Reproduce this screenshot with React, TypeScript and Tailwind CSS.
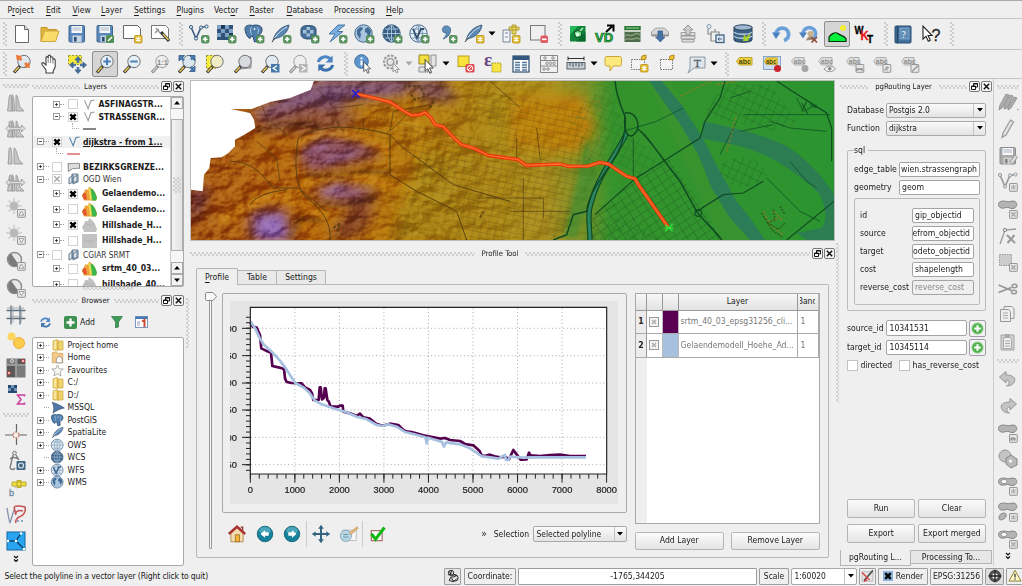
import React from "react";

type Kids = { children?: React.ReactNode };

/* ---------- icon primitives ---------- */

function S({ children, n = 22 }: Kids & { n?: number }) {
  return (
    <svg viewBox="0 0 22 22" width={n} height={n} className="block shrink-0 overflow-visible">
      {children}
    </svg>
  );
}

const Plus = ({ x = 12, y = 12 }: { x?: number; y?: number }) => (
  <g transform={`translate(${x} ${y})`}>
    <rect x="0.5" y="0.5" width="7.5" height="7.5" rx="1.5" fill="#5f9a63" stroke="#4a7f50" strokeWidth="0.8" />
    <path d="M4.25 2v4.5M2 4.25h4.5" stroke="#fff" strokeWidth="1.7" />
  </g>
);
const Star = ({ x = 12, y = 12, c = "#e3bd33", s = "#b8921a" }: { x?: number; y?: number; c?: string; s?: string }) => (
  <g transform={`translate(${x} ${y})`}>
    <rect x="0.5" y="0.5" width="7.5" height="7.5" rx="1" fill={c} stroke={s} strokeWidth="0.8" />
    <path d="M4.25 1.7v5M2 3l4.5 2.6M6.5 3L2 5.6" stroke="#fff" strokeWidth="1.1" />
  </g>
);
const Lens = ({ gray = false, fill = "#dfe8ee" }: { gray?: boolean; fill?: string }) => (
  <g>
    <path d="M9 13L3 19.5" stroke={gray ? "#8b8b8b" : "#333"} strokeWidth="3.2" />
    <path d="M8 14L3.6 18.8" stroke={gray ? "#c9c9c9" : "#e8c95a"} strokeWidth="1.6" />
    <circle cx="13" cy="8.5" r="6.2" fill={fill} stroke={gray ? "#a0a0a0" : "#6c747a"} strokeWidth="1" />
  </g>
);
const Globe = ({ dark = false, light = false }: { dark?: boolean; light?: boolean }) => (
  <g>
    <circle cx="10.5" cy="10.5" r="8.7" fill={dark ? "#395d80" : light ? "#e4edf5" : "#a9c4dd"} stroke="#46698c" strokeWidth="1" />
    {dark || light ? (
      <path
        d="M2 10.5h17M10.5 2v17M4 6h13M4 15h13M10.5 2c-5.5 5-5.5 12 0 17c5.5-5 5.5-12 0-17"
        fill="none"
        stroke={dark ? "#a6c3de" : "#7e9dbb"}
        strokeWidth="1"
      />
    ) : (
      <path d="M4 7l3-3l3 1l-1 2l-2 2l1 2l-1 5l-3-5zM12 6l3-2l3 4l-1 4l-2 2l-1-4l-2-1z" fill="#426a93" />
    )}
  </g>
);
const Feather = () => (
  <g>
    <path d="M3 17C5 10 10 4 19 2C18 9 13 14 5.5 15.5z" fill="#5b88b4" stroke="#2e4d6c" strokeWidth="0.8" />
    <path d="M2 19C6 12 11 7 17 4" stroke="#d5e4f1" strokeWidth="1" fill="none" />
    <path d="M2 19l3-4" stroke="#333" strokeWidth="1" />
  </g>
);
const Arrow = () => <path d="M9 5v13l3-2.700l2.300 5l2-1l-2.300-4.800h4z" fill="#fff" stroke="#333" strokeWidth="1" />;
const Vee = ({ c = "#3f5f80" }: { c?: string }) => (
  <g fill="none" stroke={c}>
    <path d="M3 4L8 15.5L13 4.5L18.5 3.5" strokeWidth="1.7" />
    <g fill="#dbe7f1" strokeWidth="1">
      <circle cx="3" cy="4" r="1.6" />
      <circle cx="8" cy="15.5" r="1.6" />
      <circle cx="13" cy="4.5" r="1.6" />
      <circle cx="18.5" cy="3.5" r="1.6" />
    </g>
  </g>
);
const Floppy = ({ gray = false }: { gray?: boolean }) => (
  <g>
    <rect x="3" y="2.5" width="15.5" height="16.5" rx="1" fill={gray ? "#aaa" : "#5a88bd"} stroke={gray ? "#8c8c8c" : "#3b6390"} />
    <rect x="5.5" y="3" width="10.5" height="7" fill="#f5f7fa" />
    <path d="M6.5 5h8.5M6.5 7h8.5" stroke="#9aa5b1" strokeWidth="0.8" />
    <rect x="6.5" y="12.5" width="9" height="6.5" fill={gray ? "#ccc" : "#c8d4e2"} />
    <rect x="8" y="14" width="2.6" height="4.5" fill={gray ? "#888" : "#2d4d75"} />
  </g>
);
const Checker = () => (
  <g>
    <rect x="2" y="2" width="16" height="15" fill="#315379" />
    <path d="M2 2h4v4H2zM10 2h4v4h-4zM14 6h4v4h-4zM6 6h4v4H6zM2 10h4v4H2zM10 10h4v4h-4z" fill="#7fa3c7" />
    <path d="M6 2h4v4H6zM14 10h4v4h-4z" fill="#1e3a5a" />
  </g>
);
const Elephant = () => (
  <g>
    <path d="M2 5.500C2 2.500 6 1.500 9.500 2.500C13 1.500 18.500 2 19 6c.3 3-1 5-2.500 5.500h-2l.5 6.500l-3.500 1l-1.500-5.500l-1.500-.5l-1.500 2.500C4 14.500 2 9 2 5.500z" fill="#4f7dab" stroke="#294a6e" strokeWidth="1" />
    <path d="M8.500 4c-1.500 2-1.500 6 .5 8M14.500 4.500c1.500 2 1 5 0 7" fill="none" stroke="#a9c4dd" strokeWidth="1" />
    <circle cx="11.500" cy="6" r="0.900" fill="#e6eff7" />
  </g>
);
const Bean = ({ y = 0 }: { y?: number }) => (
  <path
    transform={`translate(0 ${y})`}
    d="M1.500 6.500C1.500 3 6 2.500 9.500 3.500C12.500 4.500 15 2 18 3.500C21 5.500 20 10 16 10.500C12 11 12 8.500 9 9.500C5.500 11 1.500 10 1.500 6.500z"
    fill="#b4b4b4"
    stroke="#858585"
    strokeWidth="1"
  />
);
const GB = ({ x = 12, y = 12, k = "x" }: { x?: number; y?: number; k?: string }) => (
  <g transform={`translate(${x} ${y})`}>
    <rect x="0.5" y="0.5" width="7.8" height="7.8" rx="0.5" fill="#e6e6e6" stroke="#979797" strokeWidth="1" />
    {k === "x" && <path d="M2.3 2.3l4.200 4.200M6.500 2.300l-4.200 4.200" stroke="#a5a5a5" strokeWidth="1.300" />}
    {k === "u" && <path d="M4.400 2.200l2.400 4H2z" fill="#fff" stroke="#888" strokeWidth="0.800" />}
    {k === "d" && <path d="M4.400 6.600l2.400-4H2z" fill="#fff" stroke="#888" strokeWidth="0.800" />}
    {k === "s" && <path d="M4.400 1.800v5M2 3l4.800 2.800M6.800 3L2 5.800" stroke="#aaa" strokeWidth="1" />}
  </g>
);
const Tag = ({ gray = false, w = 15 }: { gray?: boolean; w?: number }) => (
  <g>
    <path d={`M2.500 10.500L5.500 6.500H${w + 3}V14H5.500z`} fill={gray ? "#dedede" : "#f0d33c"} stroke={gray ? "#a7a7a7" : "#b79a22"} strokeWidth="0.900" />
    <text x="4.800" y="12.800" fontSize="7" fontWeight="bold" fill={gray ? "#909090" : "#4d4312"} className="font-['Liberation_Sans',sans-serif]">
      abc
    </text>
  </g>
);
const Refresh = ({ n = 22 }: { n?: number }) => (
  <S n={n}>
    <path d="M3.500 9.500C4.500 4.500 11 2 16 6" fill="none" stroke="#4e86c4" strokeWidth="3.200" />
    <path d="M18.500 2.500v7.500h-7.500z" fill="#4e86c4" />
    <path d="M18.500 12.500C17.500 17.500 11 20 6 16" fill="none" stroke="#3b71ae" strokeWidth="3.200" />
    <path d="M3.500 19.500v-7.500h7.500z" fill="#3b71ae" />
  </S>
);

/* ---------- toolbar building blocks ---------- */

function Cell({ children, on = false }: Kids & { on?: boolean }) {
  return (
    <div className="flex h-full w-[27.55px] shrink-0 items-center justify-center">
      <div className={on ? "flex h-[26px] w-[26px] items-center justify-center rounded-[2px] border border-[#8f8f8f] bg-[#d5d5d5]" : "flex"}>{children}</div>
    </div>
  );
}
const Drop = ({ gray = false, wide = false }: { gray?: boolean; wide?: boolean }) => (
  <div className={wide ? "flex h-full w-[10px] shrink-0 items-center justify-start" : "flex h-full w-[9.2px] shrink-0 items-center justify-start"}>
    <svg viewBox="0 0 8 5" width="8" height="5">
      <path d="M0.500 0.500h7L4 4.500z" fill={gray ? "#a8a8a8" : "#000"} />
    </svg>
  </div>
);
const dots = "bg-[radial-gradient(circle_at_1px_1px,#cdcdcd_0.7px,transparent_0.9px),radial-gradient(circle_at_3px_3px,#cdcdcd_0.7px,transparent_0.9px)] bg-size-[4px_4px]";
const VGrip = ({ first = false }: { first?: boolean }) => (
  <div className={first ? "flex h-full w-[8.4px] shrink-0 items-center justify-end pr-[1px]" : "flex h-full w-[11.4px] shrink-0 items-center justify-end pr-[2px]"}>
    <div className={`h-[24px] w-[4px] ${dots}`} />
  </div>
);
const HGrip = () => <div className={`h-[4px] min-w-0 flex-1 ${dots}`} />;

function DockTitle({ title, gap }: { title: string; gap: string }) {
  return (
    <div className="flex h-[14px] shrink-0 items-center">
      <HGrip />
      <span className={`${gap} text-[7.7px]`}>{title}</span>
      <HGrip />
      <div className="ml-[2px] flex gap-[1px]">
        <div className="flex h-[11px] w-[11px] items-center justify-center rounded-[2px] border border-[#777] bg-[#f6f6f6]">
          <svg viewBox="0 0 9 9" width="9" height="9" fill="#fff" stroke="#111" strokeWidth="1">
            <path d="M3.500 1.500h4v3.500h-4zM3.500 2h4" />
            <path d="M1.500 4h4v3.500h-4zM1.500 4.500h4" />
          </svg>
        </div>
        <div className="flex h-[11px] w-[11px] items-center justify-center rounded-[2px] border border-[#777] bg-[#f6f6f6]">
          <svg viewBox="0 0 9 9" width="9" height="9" stroke="#111" strokeWidth="1.500">
            <path d="M1.800 1.800l5.400 5.400M7.200 1.800L1.800 7.200" />
          </svg>
        </div>
      </div>
    </div>
  );
}

function Menu() {
  const items: [string, number, string][] = [
    ["Project", 1, "w-[38.500px]"], ["Edit", 0, "w-[26.500px]"], ["View", 0, "w-[28.500px]"], ["Layer", 0, "w-[33px]"],
    ["Settings", 0, "w-[42.500px]"], ["Plugins", 0, "w-[37.500px]"], ["Vector", 4, "w-[35.500px]"], ["Raster", 0, "w-[37px]"],
    ["Database", 0, "w-[47.500px]"], ["Processing", -1, "w-[52px]"], ["Help", 0, "w-[30px]"],
  ];
  return (
    <div className="flex h-[17.500px] shrink-0 items-center border-t border-[#a9a9a9] pl-[7.500px] pt-[1.500px]">
      {items.map(([t, u, w]) => (
        <div key={t} className={`${w} shrink-0 whitespace-nowrap text-[8.500px]`}>
          {u < 0 ? t : (
            <>
              {t.slice(0, u)}
              <span className="underline underline-offset-[1.500px]">{t[u]}</span>
              {t.slice(u + 1)}
            </>
          )}
        </div>
      ))}
    </div>
  );
}

function Toolbar1() {
  return (
    <div className="flex h-[31px] shrink-0 items-center border-t border-[#c4c4c4]">
      <VGrip first />
      <Cell><S><path d="M4.500 2.500h9l4 4v13h-13z" fill="#fff" stroke="#666" /><path d="M13.500 2.500v4h4" fill="#ddd" stroke="#666" /></S></Cell>
      <Cell><S><path d="M2 18.500V4.500h6l1.500 2h8v4" fill="#e0b63a" stroke="#c0962c" /><path d="M2 18.500l3.500-10.500h14.500l-3.500 10.500z" fill="#f9dc6c" stroke="#cfa53a" /></S></Cell>
      <Cell><S><Floppy /></S></Cell>
      <Cell><S><Floppy /><rect x="12" y="12" width="8" height="8" rx="1.500" fill="#4f9055" /><path d="M14 18l4-4" stroke="#fff" strokeWidth="1.500" /></S></Cell>
      <Cell><S><path d="M2.500 2.500h14l3 3v10h-17z" fill="#fff" stroke="#666" /><Star x={13} /></S></Cell>
      <Cell><S><path d="M2.500 2.500h14l3 3v10h-17z" fill="#fff" stroke="#777" /><path d="M6 10l4-4M7 5l4 5" stroke="#999" strokeWidth="1.500" /><path d="M12 9l8 9" stroke="#333" strokeWidth="3.200" /><path d="M14 11l5.500 6" stroke="#e6cc5b" strokeWidth="1.500" /></S></Cell>
      <VGrip />
      <Cell><S><Vee /><Plus x={13} /></S></Cell>
      <Cell><S><Checker /><Plus x={13} /></S></Cell>
      <Cell><S><Elephant /><Plus x={13} /></S></Cell>
      <Cell><S><Feather /><Plus x={13} /></S></Cell>
      <Cell><S><path d="M3 7c0-4 4-4.500 7.500-4.500S18 3 18 7v4c0 4-4 5-7.500 5S3 15 3 11z" fill="#46709b" stroke="#2c4b6d" /><path d="M5 7h3.500v3.500H5zM12 7h3.500v3.500H12zM8.500 10.500h3.500v3H8.500zM8.500 4h3.500v3H8.500z" fill="#a6c1da" /><Plus x={13} /></S></Cell>
      <Cell><S><path d="M12 2L3 11h6l-5 8L17 8.500h-6L19 2z" fill="#79aee0" stroke="#42709f" strokeWidth="0.900" /><Plus x={13} /></S></Cell>
      <Cell><S><Globe /><Plus x={13} /></S></Cell>
      <Cell><S><Globe dark /><Plus x={13} /></S></Cell>
      <Cell><S><Globe light /><path d="M5 6l4 9l4-9h3" fill="none" stroke="#314f6d" strokeWidth="1.800" /><Plus x={13} /></S></Cell>
      <Cell><S><path d="M10 3c4-.5 5.500 3 4 7c-1 3-4 5-7 6c2-2 3.500-4 3.500-6C7 10 6 8 6.500 6S8 3 10 3z" fill="#5f8dba" stroke="#3c6186" strokeWidth="0.800" /><Plus x={13} /></S></Cell>
      <Cell><S><Feather /><Star x={13} /></S></Cell>
      <Drop />
      <Cell><S><path d="M3 7h7v12H3zM5 10h3M5 14h3" fill="#f2f3f7" stroke="#76829a" /><path d="M9 4h10v3H9zM12 2h4v9h-4z" fill="#e7d65a" stroke="#a3932c" strokeWidth="0.800" /><Star x={12} /></S></Cell>
      <Cell><S><rect x="2.500" y="2.500" width="14.500" height="14.500" fill="#efefef" stroke="#777" /><rect x="12.500" y="12.500" width="7.500" height="7.500" rx="1.500" fill="#e05c62" /><path d="M14 16.300h4.500" stroke="#fff" strokeWidth="1.700" /></S></Cell>
      <VGrip />
      <Cell><S><rect x="3" y="3" width="15.500" height="15.500" fill="#12863c" /><path d="M3 3h8l-8 9z" fill="#24b85b" /><path d="M18.500 9v9.500H9z" fill="#0a6a2c" /><path d="M7 9l4-1.500l4 2l-1 4l-5 1z" fill="#7fe08f" stroke="#0b5224" /><circle cx="10.500" cy="11.500" r="1.800" fill="#e4ffe9" /><path d="M13 8l3-3" stroke="#baf0c8" strokeWidth="1.500" /></S></Cell>
      <Cell><S><text x="1" y="19" fontSize="13" fontWeight="bold" fill="#2fc84a" stroke="#0b5a1c" strokeWidth="0.700" className="font-['Liberation_Sans',sans-serif]">VD</text><path d="M12 9L18 3.500M13 2.500h6.500v6" stroke="#000" strokeWidth="2" fill="none" /></S></Cell>
      <Cell><S><rect x="2.500" y="3" width="16" height="16" fill="#4d6d4b" /><path d="M2.500 3h16v4h-16z" fill="#247a30" /><path d="M2.500 8h16" stroke="#f0f5f0" strokeWidth="1.500" /><path d="M4 5h13" stroke="#a9cfa9" /><path d="M3 13c3-3 5 1 8-1s5-2 7 0M3 17c3-3 5 0 8-1s5-1 7 0" stroke="#8a9c7c" fill="none" strokeWidth="1.500" /></S></Cell>
      <Cell><S><path d="M2.500 9l4-4h9l4 4v4h-17z" fill="#d6d6d6" stroke="#a5a5a5" /><path d="M3 11.500h16v1.500H3z" fill="#8e8e8e" /><path d="M9 8h4.500v6h2.500l-4.700 5L6.500 14H9z" fill="#4574a6" stroke="#2f5681" strokeWidth="0.700" /></S></Cell>
      <Cell><S><path d="M4 9.500h14v3H4zM4 13h14v3H4zM5 16.500h12V19H5z" fill="#ddd" stroke="#9a9a9a" strokeWidth="0.900" /><path d="M9 12V7H6l5-5l5 5h-3v5z" fill="#cfcfcf" stroke="#8c8c8c" strokeWidth="0.900" /></S></Cell>
      <Cell><S><circle cx="5" cy="3.500" r="2" fill="none" stroke="#7a96b0" /><path d="M4 6v5h4M7 9h8v9H7zM11 6v3" fill="none" stroke="#8a8a8a" strokeWidth="1.200" /><rect x="12" y="12" width="8" height="7.500" fill="#dfe8f1" stroke="#3f6288" strokeWidth="1.300" /><path d="M18 16h-4M15.500 14.500L14 16l1.500 1.500" stroke="#3f6288" fill="none" /></S></Cell>
      <Cell><S><path d="M2 4v13c0 3 18 3 18 0V4z" fill="#3c6186" stroke="#263f5a" /><ellipse cx="11" cy="4.500" rx="9" ry="2.700" fill="#9db8d0" stroke="#263f5a" /><path d="M2 9c2 3 16 3 18 0M2 13c2 3 16 3 18 0" stroke="#bdd0e0" fill="none" strokeWidth="1.300" /><path d="M11 18l1-7l2 3l5-4l-3 8z" fill="#a7cf2e" /></S></Cell>
      <VGrip />
      <Cell><S><path d="M5 11.500A6.300 6.300 0 1 1 13 17.500" fill="none" stroke="#6ba0d8" strokeWidth="3.800" /><path d="M1 9.500h8.500l-4.500 6.500z" fill="#4b82c3" /></S></Cell>
      <Cell><S><path d="M5 11.500A6.300 6.300 0 1 1 15 16" fill="none" stroke="#6ba0d8" strokeWidth="3.600" /><path d="M1 9.500h8l-4 6z" fill="#4b82c3" /><circle cx="12.500" cy="11" r="3" fill="#c9b08e" /><path d="M8 17.500c1-5 8-5 9-1z" fill="#9a8a74" /><path d="M13.500 14l5.500 5.500M19 14l-5.500 5.500" stroke="#8c4a38" strokeWidth="1.700" /></S></Cell>
      <Cell on><S><circle cx="17" cy="5" r="3" fill="#f6ee35" /><path d="M3 18.500V14c2-3 6-5.500 9-3.500c2 2 6 2 8 5v3z" fill="#00f23c" stroke="#0a2d0d" strokeWidth="1.200" /></S></Cell>
      <Cell><S><g fontWeight="bold" className="font-['Liberation_Sans',sans-serif]"><text x="1.500" y="11" fontSize="11" textLength="9" lengthAdjust="spacingAndGlyphs" stroke="#000" strokeWidth="0.300">W</text><text x="7.500" y="16.500" fontSize="12" textLength="8" lengthAdjust="spacingAndGlyphs" fill="#e8151b" stroke="#e8151b" strokeWidth="0.300">K</text><text x="14" y="20" fontSize="10" stroke="#000" strokeWidth="0.300">T</text></g></S></Cell>
      <VGrip />
      <Cell><S><rect x="3" y="3" width="16" height="17" rx="1" fill="#41719f" stroke="#294c70" /><path d="M5.500 3v17" stroke="#23415f" strokeWidth="1.500" /><rect x="8" y="5" width="9" height="11" fill="#5f8db8" stroke="#8fb1d0" strokeWidth="0.700" /><text x="9.500" y="14.500" fontSize="10" fill="#fff" className="font-['Liberation_Serif',serif]">?</text></S></Cell>
      <Cell><S><path d="M3 3v13l3-2.700l2.300 5l2-1l-2.200-4.800h4z" fill="#fff" stroke="#222" strokeWidth="1.100" /><text x="11.500" y="17.500" fontSize="16" fill="#222" stroke="#222" strokeWidth="0.300" className="font-['Liberation_Sans',sans-serif]">?</text></S></Cell>
      <VGrip />
    </div>
  );
}

function Toolbar2() {
  return (
    <div className="flex h-[30.500px] shrink-0 items-center border-y border-[#c4c4c4]">
      <VGrip first />
      <Cell><S><Lens /><path d="M5 2l6 1l-5 5zM19 15l-6-1l5-5z" fill="#ec7733" /><path d="M8 4.500l2.500 2.500M16.500 12.500l-2.500-2.500" stroke="#ec7733" strokeWidth="2.600" /></S></Cell>
      <Cell><S><path d="M7 20v-3L3 11.500c-1-2 1-2.500 2.300-1L7 12V5c0-1.800 2.200-1.800 2.200 0V3.500c0-1.800 2.400-1.800 2.400 0V5c0-1.800 2.300-1.500 2.300 0V7c0-1.600 2.300-1.500 2.300.3V14l-2 4v2z" fill="#fff" stroke="#444" strokeWidth="1.100" /><path d="M9.200 5v5M11.600 5v5M13.900 7v3.500" stroke="#666" strokeWidth="0.800" /></S></Cell>
      <Cell><S><path d="M2.500 2.500h13v9h-13z" fill="#f5e93d" stroke="#a59a20" strokeDasharray="2 1.500" /><path d="M12 3.500l3 3.500h-6zM12 20.500l3-3.500h-6zM3.500 12l3.500-3v6zM20.500 12l-3.500-3v6z" fill="#4a75a5" stroke="#2f5073" strokeWidth="0.700" /><path d="M12 7v3M12 14v3M7 12h3M14 12h3" stroke="#4a75a5" strokeWidth="2.600" /></S></Cell>
      <Cell on><S><Lens fill="#e7eff6" /><path d="M13 4.800v7.400M9.300 8.500h7.400" stroke="#4a7db5" strokeWidth="2" /></S></Cell>
      <Cell><S><Lens fill="#e7eff6" /><path d="M9.300 8.500h7.400" stroke="#4a7db5" strokeWidth="2" /></S></Cell>
      <Cell><S><Lens gray fill="#ececec" /><text x="8" y="11.500" fontSize="7.500" fontWeight="bold" fill="#888" className="font-['Liberation_Sans',sans-serif]">1:1</text></S></Cell>
      <Cell><S><Lens fill="#dbe6ef" /><path d="M3 2.500h5.500L3 8zM19 2.500v5.500l-5.500-5.500zM19 18.500h-5.500l5.500-5.500z" fill="#4a79ae" stroke="#315a88" strokeWidth="0.800" /><path d="M4 3.500l4 4M18 3.500l-3 3M18 17.500l-3.500-3.500" stroke="#4a79ae" strokeWidth="2.500" /></S></Cell>
      <Cell><S><path d="M2.500 2.500h9v13h-9z" fill="#f6ec3f" stroke="#9b9020" strokeDasharray="2 1.500" /><Lens fill="#f2ecc6" /></S></Cell>
      <Cell><S><path d="M8 5l11-1v11l-11 1z" fill="#b9b9bd" stroke="#8f8f95" /><Lens fill="#d9dadd" /></S></Cell>
      <Cell><S><Lens /><rect x="12" y="11" width="8.500" height="8.500" fill="#4779a9" /><path d="M18 12.700l-3.800 2.500L18 17.700" fill="none" stroke="#fff" strokeWidth="1.300" /></S></Cell>
      <Cell><S><Lens gray fill="#eee" /><rect x="12" y="11" width="8.500" height="8.500" fill="#b5b5b5" /><path d="M14.500 12.700l3.800 2.500l-3.800 2.500" fill="none" stroke="#fff" strokeWidth="1.300" /></S></Cell>
      <Cell><Refresh n={21} /></Cell>
      <VGrip />
      <Cell><S><circle cx="8.500" cy="8.500" r="6.800" fill="#5d94cc" stroke="#3d6d9f" /><path d="M8.500 4.500v1.800M8.500 7.500v5" stroke="#fff" strokeWidth="2" /><g transform="translate(4 5) scale(0.750)"><Arrow /></g></S></Cell>
      <Cell><S><circle cx="9.500" cy="9" r="6.500" fill="#e6e6e6" stroke="#9a9a9a" strokeWidth="2" strokeDasharray="2.500 1.300" /><circle cx="9.500" cy="9" r="3.300" fill="none" stroke="#9a9a9a" strokeWidth="1.300" /><path d="M12 10v9l2-2l1.500 3l1.500-1l-1.500-2.500h3z" fill="#eee" stroke="#999" /></S></Cell>
      <Drop gray />
      <Cell><S><path d="M2 2h10v9H2z" fill="#f3df40" stroke="#958722" /><path d="M14 2h5v11h-5zM2 14h9v5H2z" fill="#e4e4e6" stroke="#909096" /><g transform="translate(0 2) scale(0.900)"><Arrow /></g></S></Cell>
      <Drop wide />
      <Cell><S><rect x="3" y="3" width="11" height="10.500" fill="#f7e33c" stroke="#b6a127" /><rect x="10.500" y="11" width="9" height="8.500" rx="1.500" fill="#df4a50" /><circle cx="15" cy="15.200" r="2.700" fill="none" stroke="#fff" /><path d="M13 17l4-4" stroke="#fff" /></S></Cell>
      <Cell><S><text x="2" y="12.500" fontSize="19" fontWeight="bold" fill="#674683" className="font-['Liberation_Serif',serif]">ε</text><path d="M10 10h9v9h-9z" fill="#f7e546" stroke="#a59a20" strokeDasharray="1.500 1" /></S></Cell>
      <Cell><S><rect x="3" y="3" width="16" height="16" fill="#fff" stroke="#2c4c6e" strokeWidth="1.200" /><path d="M3 3h16v4H3z" fill="#32587f" /><path d="M5 9.500h5M5 12h5M5 14.500h5M5 17h5M12 9.500h5M12 12h5M12 14.500h5M12 17h5" stroke="#55789b" strokeWidth="1.300" /></S></Cell>
      <Cell><S><path d="M2.500 2.500h17v17h-17zM2.500 7.500h17M2.500 13h17" fill="#f1f1f1" stroke="#858585" /><g fill="#ddd" stroke="#858585" strokeWidth="0.800"><circle cx="7" cy="5" r="1.300" /><circle cx="15" cy="5" r="1.300" /><circle cx="9" cy="10.300" r="1.300" /><circle cx="12.500" cy="10.300" r="1.300" /><circle cx="16" cy="10.300" r="1.300" /><circle cx="6" cy="16" r="1.300" /><circle cx="10" cy="16" r="1.300" /></g></S></Cell>
      <Cell><S><path d="M3 5.500h16M3 3.500v4M19 3.500v4" stroke="#333" /><rect x="2" y="9.500" width="18" height="6.500" fill="#c6cdd4" stroke="#58626c" /><path d="M5 10v3M8 10v4M11 10v3M14 10v4M17 10v3" stroke="#48525c" /></S></Cell>
      <Drop />
      <Cell><S><path d="M4.500 3.500h13c2 0 2 1 2 2v5c0 2-1 2.500-2 2.500h-6l-3.500 5v-5h-3c-1.500 0-2-1-2-2.500v-5c0-1 .5-2 2-2z" fill="#fbe97e" stroke="#caa63a" /></S></Cell>
      <Cell><S><rect x="2.500" y="6.500" width="13" height="10" fill="#f3f3f3" stroke="#777" strokeDasharray="1.500 1" /><path d="M12 7l1-4l4-1v4z" fill="#eec334" stroke="#b08a1b" /><Star x={11} y={11} /></S></Cell>
      <Cell><S><rect x="3.500" y="6.500" width="12" height="10" fill="#f3f3f3" stroke="#777" strokeDasharray="1.500 1" /><path d="M12 7l1-4l4-1v4z" fill="#eec334" stroke="#b08a1b" /></S></Cell>
      <div className="w-px shrink-0" />
      <Cell><S><path d="M4 4h15v11H8l-6 5l2-5z" fill="#dfe5ea" stroke="#8c98a3" /><text x="8" y="13.500" fontSize="11" fill="#4a5a69" stroke="#4a5a69" strokeWidth="0.300" className="font-['Liberation_Serif',serif]">T</text></S></Cell>
      <Drop />
      <VGrip />
      <Cell><S><g transform="translate(0 -2)"><Tag /></g></S></Cell>
      <Cell><S><rect x="2.500" y="3.500" width="17" height="13" fill="#cfdef0" stroke="#88a6c7" /><g transform="translate(1 -1) scale(0.850 0.900)"><Tag /></g><circle cx="16.500" cy="15.500" r="3.500" fill="#c8232b" /></S></Cell>
      <Cell><S><g transform="translate(0 -2)"><Tag gray w={12} /></g><circle cx="16" cy="15.500" r="3.500" fill="#a5a5a5" /></S></Cell>
      <Cell><S><g transform="translate(0 -2)"><Tag gray w={13} /></g><path d="M8 16c3-4 9-4 11.500 0c-3 3.500-9 3.500-11.500 0z" fill="#eee" stroke="#999" /><circle cx="13.700" cy="15.700" r="1.800" fill="#888" /></S></Cell>
      <Cell><S><g transform="translate(0 -2)"><Tag gray w={12} /></g><GB x={11.500} y={11} k="" /><path d="M13 18v-2h5v2" stroke="#888" strokeWidth="1.300" fill="none" /></S></Cell>
      <Cell><S><g transform="translate(0 -2)"><Tag gray w={12} /></g><GB x={11.500} y={11} k="" /><path d="M14 17.500c0-3 2-3 4-3M16 13.500v4" stroke="#888" fill="none" /></S></Cell>
      <Cell><S><g transform="translate(0 -2)"><Tag gray w={12} /></g><GB x={11.500} y={11} k="" /><path d="M13 18.500l6-6" stroke="#999" strokeWidth="1.500" /></S></Cell>
    </div>
  );
}

/* ---------- side icon strips ---------- */

const VCell = ({ children }: Kids) => <div className="flex h-[26.650px] w-full shrink-0 items-center justify-center">{children}</div>;
const Hist = ({ arrows = false, thin = false }: { arrows?: boolean; thin?: boolean }) => (
  <S>
    <path d={thin ? "M3 20C4 12 3.500 4 5 3.500s2 8 2 16.500zM9 20V4c2 0 3 6 5 12l4 4z" : "M2.500 20C4 12 3.500 5 5 4s2 6 2.500 16zM7 20V3.500c2 1 2 8 3 16.500zM11 20V4c2 0 2 6 4 12l4 4z"} fill="#c6c6c6" stroke="#9a9a9a" strokeWidth="0.900" />
    {arrows && <path d="M1 11.500l3.500-3.500v2.200h12V8l3.500 3.500l-3.500 3.500v-2.200h-12V15z" fill="#dedede" stroke="#9a9a9a" strokeWidth="0.900" />}
  </S>
);
const Sun = ({ k }: { k: string }) => (
  <S>
    <circle cx="9" cy="9" r="4.500" fill="#b9b9b9" />
    <path d="M9 1v3M9 14v3M1 9h3M14 9h3M3.500 3.500l2 2M14.500 3.500l-2 2M3.500 14.500l2-2" stroke="#cbcbcb" strokeWidth="1.500" />
    <GB k={k} />
  </S>
);
const Contrast = ({ k }: { k: string }) => (
  <S>
    <circle cx="9.500" cy="9.500" r="7" fill="#e8e8e8" stroke="#8f8f8f" strokeWidth="1.500" />
    <path d="M6 3.500A7 7 0 0 0 14 15z" fill="#7b7b7b" />
    <GB k={k} />
  </S>
);
const Chevron = () => (
  <div className="flex h-[14px] w-full shrink-0 items-start justify-center">
    <svg viewBox="0 0 6 8" width="6" height="8" fill="none" stroke="#111" strokeWidth="1.200">
      <path d="M1 1l2 2l2-2M1 4.500l2 2l2-2" />
    </svg>
  </div>
);

function LeftStrip() {
  return (
    <div className="flex w-[32px] shrink-0 flex-col">
      <div className="flex h-[9.300px] shrink-0 items-end px-[3px]"><HGrip /></div>
      <VCell><Hist /></VCell>
      <VCell><Hist arrows /></VCell>
      <VCell><Hist thin /></VCell>
      <VCell><Hist arrows /></VCell>
      <VCell><Sun k="u" /></VCell>
      <VCell><Sun k="d" /></VCell>
      <VCell><Contrast k="u" /></VCell>
      <VCell><Contrast k="d" /></VCell>
      <VCell><S><path d="M6 1.500v19M15 1.500v19M1.500 6.500h19M1.500 14.500h19" stroke="#5c7083" strokeWidth="1.300" /><path d="M2 4h17M4 12l14 1M8 2v17M17 4l-1 15" stroke="#999" strokeWidth="0.700" /></S></VCell>
      <VCell><S><circle cx="6.500" cy="6.500" r="4" fill="#fbd55f" /><circle cx="14" cy="13" r="5.500" fill="#fbcc4c" stroke="#efae3c" /></S></VCell>
      <VCell><S><rect x="1.500" y="1.500" width="19" height="19" fill="#7a7a7a" /><path d="M2 9h8v11H2zM13 2h7v7h-7z" fill="#595959" /><path d="M11 2v18M2 8h18" stroke="#9a9a9a" strokeWidth="2" /><circle cx="4" cy="16" r="1.500" fill="#fff" stroke="#c53030" /><circle cx="18" cy="4" r="1.500" fill="#fff" stroke="#c53030" /><circle cx="7" cy="4" r="1.500" fill="none" stroke="#ddd" /></S></VCell>
      <VCell><S><path d="M3 1h9v8H3z" fill="#274a70" /><path d="M6 1h3v3H6zM3 4h3v3H3zM9 4h3v3H9z" fill="#7398bb" /><path d="M19.500 12.500v-1.500h-7l3.500 4.500L12.500 20h7V18.500" fill="none" stroke="#cb3c9d" strokeWidth="1.500" /></S></VCell>
      <div className="flex h-[13.500px] shrink-0 items-center px-[3px]"><HGrip /></div>
      <VCell><S><path d="M11.500 0v8M11.500 14v7M0 11h8M14 11h8" stroke="#666" strokeWidth="1.200" /><circle cx="11" cy="11" r="3" fill="none" stroke="#d07b66" strokeDasharray="2 1.200" strokeWidth="1.300" /></S></VCell>
      <VCell><S><circle cx="9.500" cy="3" r="1.800" fill="none" stroke="#777" /><path d="M8 5L5 18M11 5l3 5M5 9c2-2 6-2 8 0M5 18c1 2 4 2 5 0" fill="none" stroke="#777" strokeWidth="1.300" /><rect x="11.500" y="11" width="9" height="9" rx="1" fill="#3f6680" /><circle cx="16" cy="15.500" r="2.500" fill="none" stroke="#dbe6ee" strokeWidth="1.200" /></S></VCell>
      <VCell><S><path d="M7 5h14v4H7zM12 3.500h4v7h-4z" fill="#efdf3f" stroke="#b6a32b" strokeWidth="0.900" /><text x="4" y="19" fontSize="9" fill="#6b87a6" stroke="#6b87a6" strokeWidth="0.300" className="font-['Liberation_Sans',sans-serif]">b</text><path d="M9 9l3 3" stroke="#999" strokeDasharray="1 1" /></S></VCell>
      <VCell><S><path d="M2 4c1 5 1 9 3 15M5 19L9 6" fill="none" stroke="#8393ab" strokeWidth="1.300" /><path d="M9 3c3-2 7-1 11 0c1 4-1 9-6 10c-2 1-4 4-3 6M10 10c2-4 5-4 8-3M9 3l2 8" fill="none" stroke="#c55050" strokeWidth="1.500" /><circle cx="17" cy="17" r="1" fill="#6b93c0" /><circle cx="13" cy="17" r="1" fill="#6b93c0" /></S></VCell>
      <VCell><S><rect x="2" y="2" width="18" height="18" fill="#29a5f0" stroke="#18659e" /><path d="M3 11h8L16 3M11 11l8 8" stroke="#0b3f6b" fill="none" strokeWidth="1.300" /><circle cx="11" cy="11" r="1.300" fill="#fff" /><circle cx="3" cy="11" r="1.300" fill="#fff" /><circle cx="16" cy="3.500" r="1.300" fill="#fff" /><circle cx="19" cy="19" r="1.300" fill="#fff" /></S></VCell>
      <Chevron />
    </div>
  );
}

function RightStrip() {
  return (
    <div className="flex w-[28px] shrink-0 flex-col">
      <div className="flex h-[10px] shrink-0 items-end px-[3px]"><HGrip /></div>
      <VCell><S><path d="M3 14L9 3l3 1l-7 13l-3 2zM7 15l6-11l3 1l-6 12l-3 1zM11 16l6-10l3 1l-6 10l-3 2z" fill="#adadad" stroke="#8c8c8c" strokeWidth="0.800" /><path d="M20 18h2l-1 1.500z" fill="#888" /></S></VCell>
      <VCell><S><path d="M6 15L13.500 2l3 2L9 17L5 19.500z" fill="#e2e2e2" stroke="#999" strokeWidth="1.200" /></S></VCell>
      <VCell><S><Floppy gray /><path d="M13 17l5-7l2.500 2l-5 7z" fill="#ddd" stroke="#999" /></S></VCell>
      <VCell><S><Vee c="#9b9b9b" /><GB k="s" /></S></VCell>
      <VCell><S><Bean /><GB k="x" /></S></VCell>
      <VCell><S><path d="M3 19L8 5L19 4" fill="none" stroke="#999" strokeWidth="1.300" /><circle cx="8" cy="5" r="1.700" fill="#ddd" stroke="#888" /><path d="M10 10l8 8M17.500 10l-7 8" stroke="#999" strokeWidth="2" /></S></VCell>
      <VCell><S><rect x="2.500" y="3.500" width="12" height="11" fill="#ccc" stroke="#999" strokeDasharray="1.500 1" /><GB k="x" /></S></VCell>
      <VCell><S><path d="M1.500 7l13 5.500M1.500 14.500l13-5" stroke="#969696" strokeWidth="1.700" /><ellipse cx="17.500" cy="8" rx="2.500" ry="1.800" fill="none" stroke="#969696" strokeWidth="1.400" /><ellipse cx="17" cy="14" rx="2.500" ry="1.800" fill="none" stroke="#969696" strokeWidth="1.400" /></S></VCell>
      <VCell><S><path d="M7 2.500h8l2 2v10H7z" fill="#eee" stroke="#999" /><path d="M3.500 5.500h8l2 2v10h-10z" fill="#eee" stroke="#999" /><path d="M6 9h5M6 11.500h5M6 14h5" stroke="#aaa" /></S></VCell>
      <VCell><S><path d="M4 4h13v15H4z" fill="#d0d0d0" stroke="#a5a5a5" /><path d="M6.500 6.500h6l2 2v9h-8z" fill="#eee" stroke="#aaa" /><path d="M8 3h5v3H8z" fill="#aaa" /><path d="M8 10h5M8 12.500h5M8 15h5" stroke="#aaa" /></S></VCell>
      <div className="flex h-[10.500px] shrink-0 items-center px-[3px]"><HGrip /></div>
      <VCell><S><path d="M2.500 9L9 3.500V7c7 0 10 3 8.500 6.500C16.500 16.500 13 18 9.500 18c3-1.500 4-5.500-.5-6v3z" fill="#c4c4c4" stroke="#949494" /></S></VCell>
      <VCell><S><path d="M19.500 9L13 3.500V7C6 7 3 10 4.500 13.500C5.500 16.500 9 18 12.500 18c-3-1.500-4-5.500.5-6v3z" fill="#c4c4c4" stroke="#949494" /></S></VCell>
      <VCell><S><Bean /><GB k="" /><path d="M14 18.500v-2.500h4v2.500" stroke="#888" fill="#aaa" /></S></VCell>
      <VCell><S><circle cx="8" cy="8" r="6" fill="#c4c4c4" stroke="#959595" /><path d="M14 7l6 4v6l-6 3l-5-4v-6z" fill="#b9b9b9" stroke="#888" /><circle cx="13.500" cy="13" r="1.500" fill="#fff" /></S></VCell>
      <VCell><S><Bean /><ellipse cx="7" cy="6.500" rx="3" ry="2" fill="#fff" stroke="#888" strokeWidth="0.800" /><GB k="s" /></S></VCell>
      <VCell><S><Bean y={-1} /><path d="M2 17c0-3 2-5 5-5s3 3 1 5s-6 3-6 0z" fill="#b4b4b4" stroke="#888" /><GB k="s" /></S></VCell>
      <VCell><S><Bean /><ellipse cx="7" cy="6.500" rx="3" ry="2" fill="#fff" stroke="#888" strokeWidth="0.800" /><GB k="x" /></S></VCell>
      <Chevron />
    </div>
  );
}

/* ---------- docks ---------- */

const Expander = ({ s }: { s: "+" | "-" }) => (
  <svg viewBox="0 0 7 7" width="7" height="7" className="shrink-0" fill="#fff" stroke="#888" strokeWidth="0.800">
    <rect x="0.500" y="0.500" width="6" height="6" />
    <path d={s === "+" ? "M2 3.500h3M3.500 2v3" : "M2 3.500h3"} stroke="#222" />
  </svg>
);
const Check = ({ v }: { v: 0 | 1 | 2 }) => (
  <div className="flex h-[10px] w-[10px] shrink-0 items-center justify-center border border-[#d2d2d2] bg-white">
    {v > 0 && (
      <svg viewBox="0 0 8 8" width="8" height="8">
        <path d="M1.300 1.300l5.400 5.400M6.700 1.300l-5.400 5.400" stroke={v === 1 ? "#000" : "#aaa"} strokeWidth={v === 1 ? 2.400 : 1.500} />
      </svg>
    )}
  </div>
);
const Terrain = () => (
  <svg viewBox="0 0 15 14" width="16" height="15">
    <path d="M0 9l2-3l1-3l3 0l1-3l4 3l2 3l2 5l-1 3H2z" fill="#f0a33a" />
    <path d="M8 2l3 1l2 3l2 5l-1 3h-4z" fill="#3cb54a" />
    <path d="M0 9l2-3l2 1l1 6H2z" fill="#e2572f" />
    <path d="M7 2l1 3l1 8" stroke="#e8e050" strokeWidth="2" fill="none" />
  </svg>
);
const Shade = ({ full = false }: { full?: boolean }) => (
  <svg viewBox="0 0 15 14" width="15" height="14">
    <path d={full ? "M0 0h15v14H0z" : "M0 9l2-3l1-3l3 0l1-3l4 3l2 3l2 5l-1 3H2z"} fill="#c2c2c2" />
    <path d="M3 8l3-2l3 2l3-2" stroke="#b2b2b2" fill="none" />
  </svg>
);
const LineV = ({ c }: { c: string }) => (
  <svg viewBox="0 0 14 12" width="13" height="11" fill="none" stroke={c} strokeWidth="1.200">
    <path d="M1.500 1.500l4 9l3-8.500l4-1" />
  </svg>
);
const GroupIcon = () => (
  <svg viewBox="0 0 12 12" width="12" height="12" fill="#dde4ec" stroke="#60788f" strokeWidth="1">
    <path d="M4 1h6v8h-6zM1 5l4-3v7l-4 2zM5 5l4-3v7l-4 2z" />
  </svg>
);
const Poly = () => (
  <svg viewBox="0 0 14 10" width="14" height="10">
    <path d="M1 1.500c4 1 7-1 11.500 0v5c-3-1-5 1-7 0l-4 3z" fill="#ddd" stroke="#888" />
  </svg>
);

const short = "h-[12.500px]";
const tall = "h-[15.700px]";

function Node({ pad, h, e, v, icon, gap = "ml-[1.500px]", label, b = true, u = false, hl = false }: {
  pad: string; h: string; e: "+" | "-"; v: 0 | 1 | 2; icon: React.ReactNode; gap?: string; label: string; b?: boolean; u?: boolean; hl?: boolean;
}) {
  return (
    <div className={`flex shrink-0 items-center ${pad} ${h} ${hl ? "bg-[#f1f1f1]" : ""}`}>
      <Expander s={e} />
      <div className="w-[4.500px] border-t border-dotted border-[#aaa]" />
      <div className="ml-[3.500px]"><Check v={v} /></div>
      <div className="ml-[4.500px] flex w-[15px] items-center justify-center">{icon}</div>
      <span className={`${gap} whitespace-nowrap ${b ? "text-[8.600px] font-bold" : "text-[8.300px] text-[#333]"} ${u ? "underline" : ""}`}>{label}</span>
    </div>
  );
}
const Legend = ({ pad, c }: { pad: string; c: string }) => (
  <div className={`flex shrink-0 items-center ${short} ${pad}`}>
    <div className="mr-[4px] h-[6px] w-[7px] -translate-y-[3px] border-b border-l border-dotted border-[#aaa]" />
    <svg width="13" height="2"><path d="M0 1h13" stroke={c} strokeWidth="1.300" /></svg>
  </div>
);
const SBtn = ({ up }: { up: boolean }) => (
  <div className="flex h-[12px] w-[12px] shrink-0 items-center justify-center border border-[#aaa] bg-[#f3f3f3]">
    <svg viewBox="0 0 6 4" width="6" height="4"><path d={up ? "M0 3.500h6L3 0z" : "M0 .500h6L3 4z"} /></svg>
  </div>
);

function LayersDock() {
  return (
    <div className="flex h-[208px] shrink-0 flex-col">
      <div className="pt-[0.500px]"><DockTitle title="Layers" gap="mx-[4px]" /></div>
      <div className="mt-[2.500px] flex h-[191px] rounded-[2px] border border-[#a9a9a9] bg-white">
        <div className="flex min-w-0 flex-1 flex-col overflow-hidden pt-[1.200px]">
          <Node pad="pl-[19.500px]" h={short} e="+" v={0} icon={<LineV c="#999" />} label="ASFINAGSTR..." />
          <Node pad="pl-[19.500px]" h={short} e="-" v={1} icon={<LineV c="#999" />} label="STRASSENGR..." />
          <Legend pad="pl-[39px]" c="#444" />
          <Node pad="pl-[4px]" h={short} e="-" v={1} icon={<LineV c="#5580ab" />} label="dijkstra - from 1..." u hl />
          <Legend pad="pl-[23px]" c="#d4555c" />
          <Node pad="pl-[4px]" h={short} e="+" v={0} icon={<Poly />} label="BEZIRKSGRENZE..." />
          <Node pad="pl-[4px]" h={short} e="-" v={2} icon={<GroupIcon />} label="OGD Wien" b={false} />
          <Node pad="pl-[19.500px]" h={tall} e="+" v={1} icon={<Terrain />} gap="ml-[5px]" label="Gelaendemo..." />
          <Node pad="pl-[19.500px]" h={tall} e="+" v={0} icon={<Terrain />} gap="ml-[5px]" label="Gelaendemo..." />
          <Node pad="pl-[19.500px]" h={tall} e="+" v={1} icon={<Shade />} gap="ml-[5px]" label="Hillshade_H..." />
          <Node pad="pl-[19.500px]" h={tall} e="+" v={0} icon={<Shade full />} gap="ml-[5px]" label="Hillshade_H..." />
          <Node pad="pl-[4px]" h={short} e="-" v={0} icon={<GroupIcon />} label="CGIAR SRMT" b={false} />
          <Node pad="pl-[19.500px]" h={tall} e="+" v={0} icon={<Terrain />} gap="ml-[5px]" label="srtm_40_03..." />
          <Node pad="pl-[19.500px]" h={tall} e="+" v={0} icon={<Shade />} gap="ml-[5px]" label="hillshade_40..." />
        </div>
        <div className="flex w-[13px] shrink-0 flex-col items-center border-l border-[#ccc] bg-[#f6f6f6]">
          <SBtn up />
          <div className="mt-[10px] flex h-[132px] w-[12px] items-center justify-center border border-[#b0b0b0] bg-gradient-to-r from-[#f3f3f3] to-[#e2e2e2]">
            <div className={`h-[16px] w-[8px] ${dots}`} />
          </div>
          <div className="min-h-0 flex-1" />
          <SBtn up />
          <SBtn up={false} />
        </div>
      </div>
    </div>
  );
}

const Folder = () => (
  <svg viewBox="0 0 12 12" width="12" height="12">
    <path d="M1 2l4-1.500l1 1.500h5v9H1z" fill="#f0d36c" stroke="#c9a43b" strokeWidth="0.700" />
    <path d="M6 1.500v10" stroke="#d6b04a" strokeWidth="1.500" /><path d="M3 2v8" stroke="#fbeeb0" strokeWidth="1.500" />
  </svg>
);

function BrowserDock() {
  const rows: [string, boolean, React.ReactNode][] = [
    ["Project home", true, <Folder />],
    ["Home", true, <S n={13}><path d="M2 3l7-2l2 3h9v16H2z" fill="#f3c98a" stroke="#c99545" /><path d="M9 20V13l5-4l5 4v7z" fill="#fff" stroke="#888" strokeWidth="1.300" /></S>],
    ["Favourites", true, <S n={13}><path d="M11 1.500l2.800 6.500l7 .6l-5.300 4.600l1.600 7l-6.100-3.700l-6.100 3.700l1.600-7L1.200 8.600l7-.6z" fill="#f7f7f2" stroke="#999" strokeWidth="1.300" /></S>],
    ["C:/", true, <Folder />],
    ["D:/", true, <Folder />],
    ["MSSQL", false, <S n={14}><path d="M2 2c6 2 12 4 19 9c-6 1-12 4-18 8c2-5 2-10-1-17z" fill="#5077a6" stroke="#304f75" /></S>],
    ["PostGIS", true, <S n={15}><Elephant /></S>],
    ["SpatiaLite", true, <S n={14}><Feather /></S>],
    ["OWS", true, <S n={15}><Globe light /></S>],
    ["WCS", false, <S n={15}><Globe dark /></S>],
    ["WFS", true, <S n={15}><Globe light /><path d="M5 6l4 9l4-9h3" fill="none" stroke="#3f678f" strokeWidth="2.200" /></S>],
    ["WMS", true, <S n={15}><Globe /></S>],
  ];
  return (
    <div className="flex min-h-0 flex-1 flex-col">
      <div className="flex h-[6.500px] shrink-0 items-start justify-center"><div className={`h-[3px] w-[50px] ${dots}`} /></div>
      <DockTitle title="Browser" gap="mx-[4px]" />
      <div className="flex h-[29.500px] shrink-0 items-center pl-[7px]">
        <Refresh n={13} />
        <div className="ml-[12px] flex w-[54px] items-center gap-[3px] text-[8.600px]">
          <svg viewBox="0 0 13 13" width="13" height="13"><rect width="13" height="13" rx="2" fill="#3f9150" /><path d="M6.500 2.500v8M2.500 6.500h8" stroke="#fff" strokeWidth="2.300" /></svg>
          Add
        </div>
        <svg viewBox="0 0 12 12" width="12" height="12" className="-ml-[7px]"><path d="M0.500 0.500h11L7.500 6v5l-3 1V6z" fill="#3f9a58" stroke="#2c7a42" strokeWidth="0.700" /></svg>
        <svg viewBox="0 0 13 12" width="13" height="12" className="ml-[12px]"><rect x="0.500" y="0.500" width="12" height="11" fill="#fff" stroke="#7a9ac0" /><path d="M0.500 0.500h12v2.500H.5z" fill="#4a78b5" /><path d="M2 5h3v5H2z" fill="#ccd" /><path d="M7 5.500l2.500-1.500V11" stroke="#d04b33" strokeWidth="2" fill="none" /></svg>
      </div>
      <div className="flex h-[229px] flex-col rounded-[2px] border border-[#a9a9a9] bg-white pt-[1px]">
        {rows.map(([t, e, ic]) => (
          <div key={t} className={`flex ${short} shrink-0 items-center pl-[4px]`}>
            {e ? <Expander s="+" /> : <div className="w-[7px]" />}
            <div className="w-[5px] border-t border-dotted border-[#aaa]" />
            <div className="ml-[1px] flex w-[15px] items-center justify-center">{ic}</div>
            <span className="ml-[2.500px] text-[8.600px]">{t}</span>
          </div>
        ))}
      </div>
    </div>
  );
}

/* ---------- map ---------- */

function MapView() {
  const canal = "M1310 165C1280 230 1225 290 1205 370C1190 410 1200 440 1200 490";
  const route =
    "M497 47L540 57L600 72L640 98L665 112L690 110L705 103L722 118L735 140L760 146L790 178L815 200L850 210L895 232L985 245L1008 262L1110 258L1135 265L1195 264L1230 253L1255 258L1310 295L1335 302L1345 320L1435 448";
  return (
    <svg viewBox="3 9 1929 477" width="643" height="159" preserveAspectRatio="none" className="block">
      <defs>
        <linearGradient id="base" gradientUnits="userSpaceOnUse" x1="0" x2="1930" y1="0" y2="60">
          <stop offset="0" stopColor="#a85a14" />
          <stop offset="0.200" stopColor="#b5680c" />
          <stop offset="0.360" stopColor="#b2780e" />
          <stop offset="0.480" stopColor="#ad8a18" />
          <stop offset="0.560" stopColor="#ac9020" />
          <stop offset="0.615" stopColor="#7d9128" />
          <stop offset="0.660" stopColor="#35932c" />
          <stop offset="1" stopColor="#2b9430" />
        </linearGradient>
        <filter id="soft" x="-40%" y="-40%" width="180%" height="180%"><feGaussianBlur stdDeviation="17" /></filter>
        <filter id="soft2" x="-40%" y="-40%" width="180%" height="180%"><feGaussianBlur stdDeviation="8" /></filter>
        <filter id="relief" x="0" y="0" width="100%" height="100%" colorInterpolationFilters="sRGB">
          <feTurbulence type="fractalNoise" baseFrequency="0.012 0.018" numOctaves="5" seed="8" />
          <feColorMatrix values="0 0 0 0 0  0 0 0 0 0  0 0 0 0 0  1 0 0 0 0" />
          <feDiffuseLighting surfaceScale="38" lightingColor="#ffffff" diffuseConstant="0.720">
            <feDistantLight azimuth="225" elevation="45" />
          </feDiffuseLighting>
        </filter>
        <linearGradient id="fade" x1="0" x2="1" y1="0" y2="0">
          <stop offset="0" stopColor="#fff" /><stop offset="0.400" stopColor="#aaa" /><stop offset="0.600" stopColor="#333" /><stop offset="0.700" stopColor="#000" />
        </linearGradient>
        <mask id="hills"><rect x="0" y="0" width="1940" height="490" fill="url(#fade)" /></mask>
        <pattern id="g1" width="22" height="18" patternUnits="userSpaceOnUse" patternTransform="rotate(12)"><path d="M0 0h22M0 0v18" stroke="#3d3410" strokeWidth="2.600" fill="none" opacity="0.420" /></pattern>
        <pattern id="g2" width="26" height="22" patternUnits="userSpaceOnUse" patternTransform="rotate(-33)"><path d="M0 0h26M0 0v22" stroke="#14421a" strokeWidth="2.800" fill="none" opacity="0.550" /></pattern>
        <pattern id="g3" width="22" height="26" patternUnits="userSpaceOnUse" patternTransform="rotate(25)"><path d="M0 0h22M0 0v26" stroke="#14421a" strokeWidth="2.600" fill="none" opacity="0.500" /></pattern>
      </defs>
      <rect x="0" y="0" width="1940" height="490" fill="url(#base)" />
      <g filter="url(#soft)">
        <path d="M180 110L330 20L400 0L690 0L640 50L480 70L400 110L230 140z" fill="#7a4f70" />
        <path d="M200 120l180-40l140 30l-80 60l-220-10z" fill="#8e5030" />
        <path d="M640 0h110l60 70l-110 0z" fill="#7f4f50" />
        <path d="M330 215l60-45l120 20l70 40l-110 30l-100 25l-40-30z" fill="#85485a" />
        <path d="M360 345l80-35l90 20l40 20l-120 25z" fill="#85506e" />
        <path d="M180 400L290 395L310 490H180z" fill="#84507a" />
        <path d="M205 420l60-10l20 80h-70z" fill="#8a62b4" />
        <path d="M0 330h60l-20 70L0 440z" fill="#6f3038" />
        <path d="M560 400l-60 80h-90l100-130z" fill="#8a4a28" />
        <path d="M960 50h220l40 100l-60 80l-200-20z" fill="#bd840f" />
        <path d="M700 220L960 260L900 490H600z" fill="#ac8616" />
      </g>
      <g filter="url(#soft2)">
        <path d="M325 200c60-50 150-50 280 20M340 320c80-50 180-30 280 10M190 375c60-50 160 0 210 50M90 430l120-60" stroke="#d08a12" strokeWidth="18" fill="none" opacity="0.700" />
        <path d="M350 290c80 10 150-20 250-5M380 372c60 10 120 5 180-10M300 480l30-60l70 10M200 160c60-20 130-40 200-10" stroke="#5a2c18" strokeWidth="14" fill="none" opacity="0.600" />
        <path d="M340 225l70-20M400 250l90-20M400 345l60-15M230 430l20 50" stroke="#a67ab0" strokeWidth="12" fill="none" opacity="0.600" />
        <path d="M610 140c70-30 110 30 60 60" stroke="#cf9a22" strokeWidth="18" fill="none" opacity="0.600" />
        <path d="M1190 180l-30 130l-40 170h40l60-180z" fill="#3f8b30" opacity="0.700" />
      </g>
      <rect x="0" y="0" width="1940" height="490" filter="url(#relief)" mask="url(#hills)" className="opacity-80 mix-blend-soft-light" />
      <path d="M620 130l340 60v300H840l-30-90l-150-110zM820 30l360 60v110l-50 280h-290l130-250z" fill="url(#g1)" />
      <path d="M400 70h200v130h-130zM640 340l180 60v90H600l-40-120z" fill="url(#g1)" opacity="0.600" />
      <path d="M1350 290l90-50l150 230l40 20h-430l10-80z" fill="url(#g2)" />
      <path d="M1280 100l60 70l60 80l-50 50l-90-60zM1130 120l120-100l40 100l-80 180zM1200 420l130 0l90 70h-220z" fill="url(#g3)" opacity="0.700" />
      <path d="M1570 280c60-70 150-40 165 10c-40 50-120 50-165-10zM1600 20h140l80 110l-60 30l-220-50z" fill="url(#g3)" />
      <path d="M1375 9L1440 9L1660 400L1690 486H1590z" fill="#3f9430" opacity="0.500" />
      <path d="M1378 9L1415 9L1475 80L1535 175L1590 280L1640 370L1680 420L1725 486H1680L1620 420L1565 330L1525 230L1465 130L1420 70z" fill="#2b7d58" />
      <path d="M1540 130C1600 145 1700 160 1790 205C1860 250 1900 300 1932 350V486H1850L1820 465L1895 450C1920 420 1900 350 1870 330C1800 270 1740 230 1650 205C1600 190 1560 190 1535 180z" fill="#2c7d52" />
      <g fill="none" stroke="#0f4a22">
        <path d={canal} strokeWidth="16" /><path d={canal} strokeWidth="9" stroke="#2a8560" />
        <path d="M1275 9C1280 60 1295 90 1305 115C1310 150 1300 190 1280 230C1240 300 1200 330 1190 400L1150 410L1130 470L1090 486" strokeWidth="4.500" />
        <path d="M1305 105C1340 100 1350 140 1340 160C1320 190 1300 170 1305 115M1345 155C1370 170 1400 220 1470 310L1520 400C1540 430 1570 450 1595 486" strokeWidth="4.500" />
        <path d="M1215 410L1335 302L1420 250L1530 180L1545 130L1590 60L1605 9M1520 400L1600 350L1660 345L1720 310M1760 9L1800 35L1910 105L1925 150V250M1790 486L1932 370" strokeWidth="3.500" />
        <circle cx="1525" cy="405" r="10" strokeWidth="3.500" />
        <path d="M1480 90L1400 130L1300 160M1590 230L1640 130M1660 110h260M1650 160l100-20M1330 300v-120M1620 60l60-20M1800 250l50 60l30 20M1740 130l60 20l110 10M1820 60l20 40l40-20M1730 300l100 100l60 30" strokeWidth="2.200" />
        <path d="M1835 75l20 35M1850 70l-15 30M1860 80l20 10" strokeWidth="3" />
      </g>
      <path d="M1180 70h50v30h-20M1230 200l-20-80h-60M1185 245l20-20v-30l25-20M1720 400l20 40l40 30M1750 400l30 30M1740 430l30-10M1580 20l60-10M1470 55l100-50M1610 220l30-110" stroke="#7d8028" strokeWidth="5" fill="none" opacity="0.800" strokeDasharray="9 5" />
      <path d="M1715 405l30 50l35 25M1750 395l5 30l-20 10l30 20l20-20M1770 385l15 25" stroke="#26400f" strokeWidth="4" fill="none" opacity="0.700" strokeDasharray="6 4" />
      <g fill="none" stroke="#4d3813" strokeWidth="3" opacity="0.850">
        <path d="M325 180C310 260 320 320 340 350C390 390 425 430 420 486M325 180C380 150 450 130 600 170L640 210L790 320L960 370" />
        <path d="M120 250C180 250 210 280 250 330L325 330L410 400M600 170V290L680 340L800 400L830 486M180 380C200 350 250 340 290 335" />
        <path d="M290 170l-60-50l-30-80M380 30l50 60l90-10M200 190l60 50l10 70M900 9l90 80M600 160l60-60M860 360h200v60M600 160l10-60l110-20M980 180v60M1040 150l10 90M960 400h180M1000 300v190M440 130l20 30M520 120v40" strokeWidth="2.200" />
      </g>
      <path d="M640 25l50 0l15 30l-30 10l-15-20M870 420l10-20M430 450l20-15l-8 25M720 90l10-20" stroke="#4a3410" strokeWidth="6" fill="none" strokeDasharray="10 4" opacity="0.700" />
      <path d="M0 9H372L362 35L300 60L240 72L185 93H122L180 105L192 125L196 150L160 172L135 185V205L115 225L95 238L62 240L58 270L42 290L38 340L0 335z" fill="#fff" />
      <path d={route} fill="none" stroke="#e8390f" strokeWidth="11" strokeLinejoin="round" />
      <path d={route} fill="none" stroke="#ff6f2a" strokeWidth="4" strokeLinejoin="round" />
      <path d="M486 36l22 22M508 36l-22 22" stroke="#2a1fd0" strokeWidth="5" />
      <path d="M1426 440l22 20M1448 438l-22 22M1424 450h26" stroke="#2fe03a" strokeWidth="4" />
    </svg>
  );
}

/* ---------- profile tool ---------- */

const ymaj = [205, 287, 369, 450, 532, 614];
const xmaj = [0, 1, 2, 3, 4, 5, 6, 7, 8];

function Chart() {
  const purple =
    "M181 186L188 200L200 203L210 225L214 265L228 272L243 278L247 318L265 322L282 327L285 355L290 366L305 369L335 370L345 382L360 390L366 400L370 420L386 420L389 382L392 382L396 418L402 414L404 385L407 385L412 420L416 424L422 440L445 440L450 437L458 437L460 455L480 460L500 468L510 461L520 472L540 476L560 492L578 497L600 491L625 495L640 510L648 514L665 516L700 526L715 529L750 536L765 534L780 540L810 543L825 552L850 556L868 572L876 588L888 587L900 584L918 590L930 592L945 590L957 598L970 570L982 586L992 599L1010 598L1017 578L1022 586L1050 588L1080 585L1110 584L1140 588L1188 588";
  const blue =
    "M181 184L197 208L208 232L220 252L245 275L270 302L285 322L300 345L316 369L340 382L358 398L375 422L395 433L430 445L470 457L500 470L530 478L560 495L578 498L595 493L620 500L645 516L670 522L695 529L706 532L710 550L714 533L755 545L762 560L768 547L810 553L840 565L858 577L876 589L900 592L925 596L945 585L948 600L955 600L960 590L1000 593L1030 592L1188 592";
  return (
    <svg viewBox="120 123 1164 609" width="388" height="203" className="block overflow-hidden">
      <rect x="120" y="123" width="1164" height="609" fill="#e5e5e5" />
      <rect x="181" y="142" width="1069" height="500" fill="#fff" />
      <g stroke="#999" strokeWidth="2.500" strokeDasharray="3 8">
        {ymaj.map((y) => <path key={y} d={`M184 ${y}H1250`} />)}
        {xmaj.slice(1, 8).map((x) => <path key={x} d={`M${181 + x * 133.600} 145V642`} />)}
      </g>
      <path d={purple} fill="none" stroke="#55004f" strokeWidth="8" strokeLinejoin="round" />
      <path d={blue} fill="none" stroke="#a6c1e0" strokeWidth="8" strokeLinejoin="round" />
      <path d="M181 142H1250V642H181z" fill="none" stroke="#222" strokeWidth="3.500" />
      <g stroke="#222" strokeWidth="3">
        {ymaj.map((y) => <path key={y} d={`M156 ${y}H181`} />)}
        {Array.from({ length: 29 }, (_, i) => <path key={i} d={`M168 ${631 - i * 16.400}H181`} />)}
        {xmaj.map((x) => <path key={x} d={`M${181 + x * 133.600} 642V668`} />)}
        {Array.from({ length: 40 }, (_, i) => <path key={i} d={`M${181 + i * 26.720} 642V656`} />)}
      </g>
      <g fontSize="28" fill="#222" stroke="#222" strokeWidth="0.600" className="font-['Liberation_Sans',sans-serif]">
        {ymaj.map((y, i) => <text key={y} x="141" y={y + 10} textAnchor="end">{400 - i * 50}</text>)}
        {xmaj.map((x) => <text key={x} x={181 + x * 133.600} y="699" textAnchor="middle">{x * 1000}</text>)}
      </g>
    </svg>
  );
}

const btn = "flex items-center justify-center rounded-[2px] border border-[#b5b5b5] bg-gradient-to-b from-[#fbfbfb] to-[#e4e4e4] text-[8.600px] whitespace-nowrap";

function Combo({ text, cls, white = false }: { text: string; cls: string; white?: boolean }) {
  return (
    <div className={`flex items-center rounded-[2px] border border-[#a9a9a9] text-[8.400px] ${white ? "bg-white" : "bg-gradient-to-b from-[#fafafa] to-[#e4e4e4]"} ${cls}`}>
      <span className="flex-1 whitespace-nowrap pl-[2.500px]">{text}</span>
      <div className="flex h-full w-[12px] items-center justify-center border-l border-[#c4c4c4]">
        <svg viewBox="0 0 6 4" width="6" height="4"><path d="M0 0h6L3 3.500z" /></svg>
      </div>
    </div>
  );
}

function Ball({ left = false }: { left?: boolean }) {
  return (
    <S n={18}>
      <circle cx="11" cy="11" r="9.500" fill="#17809a" stroke="#0f6075" />
      <ellipse cx="11" cy="7" rx="7" ry="4.500" fill="#5fb6c9" opacity="0.700" />
      <path d={left ? "M5.500 11l5.500-4.500v2.500h4.500v4h-4.500v2.500z" : "M16.500 11l-5.500-4.500v2.500H6.500v4h4.500v2.500z"} fill="#fff" />
    </S>
  );
}

const Tool = ({ children }: Kids) => <div className="flex h-full w-[27.700px] shrink-0 items-center justify-center">{children}</div>;

function ProfileDock() {
  return (
    <div className="flex min-h-0 flex-1 flex-col pt-[5.500px]">
      <DockTitle title="Profile Tool" gap="mx-[7px]" />
      <div className="mt-[7.500px] flex h-[16px] shrink-0 items-end pl-[6px] text-[8.600px]">
        <div className="z-10 -mb-px flex h-[17px] w-[42px] items-center justify-center rounded-t-[2px] border border-b-0 border-[#b5b5b5] bg-[#efefef]"><span className="underline underline-offset-[1.500px]">P</span>rofile</div>
        <div className="flex h-[14px] w-[39px] items-center justify-center border border-b-0 border-l-0 border-[#b5b5b5] bg-[#e9e9e9]">Table</div>
        <div className="flex h-[14px] w-[49px] items-center justify-center rounded-tr-[2px] border border-b-0 border-l-0 border-[#b5b5b5] bg-[#e9e9e9]">Settings</div>
      </div>
      <div className="ml-[6px] flex h-[274px] w-[633px] rounded-[2px] border border-[#b8b8b8]">
        <div className="flex w-[24.500px] shrink-0 flex-col items-center pl-[2px] pt-[7px]">
          <svg viewBox="0 0 12 9" width="12" height="9" className="ml-[2px]"><path d="M.500 2c0-1 .500-1.500 1.500-1.500h6l3.500 4l-3.500 4h-6C1 8.500.500 8 .500 7z" fill="#f8f8f8" stroke="#888" /></svg>
          <div className="h-[248px] w-[3px] rounded-b border border-t-0 border-[#999] bg-[#f8f8f8]" />
        </div>
        <div className="flex w-[405px] shrink-0 flex-col pt-[7.500px]">
          <div className="flex h-[220px] items-center justify-start rounded-[2px] border border-[#a9a9a9] pl-[7px]"><Chart /></div>
          <div className="mt-[8.500px] flex h-[26px] items-center pl-[1.500px]">
            <Tool><S n={18}><path d="M3.500 10v10.500h15V10L11 3.500z" fill="#f3dcae" stroke="#a87f4a" /><path d="M1 11L11 2l10 9" fill="none" stroke="#a83232" strokeWidth="3" /><path d="M9 12h5v8.500H9z" fill="#f5b83a" stroke="#9a6b25" /><path d="M15.500 2.500h2.500v4" stroke="#8a3030" strokeWidth="1.500" fill="none" /></S></Tool>
            <Tool><Ball left /></Tool>
            <Tool><Ball /></Tool>
            <div className="h-full w-px shrink-0 bg-[#ccc]" />
            <Tool><S n={18}><path d="M11 1v20M1 11h20" stroke="#32647f" strokeWidth="2.400" /><path d="M11 0l3.500 4.500h-7zM11 22l3.500-4.500h-7zM0 11l4.500-3.500v7zM22 11l-4.500-3.500v7z" fill="#32647f" /></S></Tool>
            <Tool><S n={19}><path d="M4 6h16v12H4z" fill="#f6f6f6" stroke="#bbb" /><circle cx="8" cy="12.500" r="6.500" fill="#b8d6e2" stroke="#7fa5b5" /><path d="M5 11h6M5 14h6" stroke="#5f8da3" /><path d="M12 9l9-7l1 2l-8 7z" fill="#e9bb7c" stroke="#b98a4d" strokeWidth="0.700" /></S></Tool>
            <div className="h-full w-px shrink-0 bg-[#ccc]" />
            <Tool><S n={17}><rect x="3" y="6" width="14" height="13" fill="#fff" stroke="#a66" strokeWidth="1.500" /><path d="M3 10l5.500 7L20 2" fill="none" stroke="#11b814" strokeWidth="4" /></S></Tool>
            <span className="ml-auto text-[10px]">»</span>
            <span className="ml-[7px] text-[8.500px]">Selection</span>
            <Combo text="Selected polyline" cls="ml-[4px] h-[16px] w-[93.500px] shrink-0" />
          </div>
        </div>
        <div className="ml-[8.500px] flex w-[184.500px] shrink-0 flex-col pt-[7.500px]">
          <div className="flex h-[231px] flex-col border border-[#a9a9a9] bg-white">
            <div className="flex h-[17px] shrink-0 border-b border-[#999] bg-gradient-to-b from-[#f8f8f8] to-[#e2e2e2] text-[8.500px]">
              <div className="w-[11px] border-r border-[#999]" />
              <div className="w-[15.500px] border-r border-[#999]" />
              <div className="w-[16px] border-r border-[#999]" />
              <div className="flex flex-1 items-center justify-center border-r border-[#999]">Layer</div>
              <div className="flex w-[21px] items-center justify-center border-r border-[#bbb]">
                <div className="flex h-full w-[15px] items-center justify-center overflow-hidden"><span className="whitespace-nowrap">Band</span></div>
              </div>
            </div>
            {[["1", "bg-[#5a0052]", "srtm_40_03_epsg31256_cli..."], ["2", "bg-[#a6c0de]", "Gelaendemodell_Hoehe_Ad..."]].map(([n, c, t]) => (
              <div key={n} className="flex h-[23.500px] shrink-0 border-b border-[#aaa] text-[8.600px] text-[#777]">
                <div className="flex w-[11px] items-center justify-center border-r border-[#999] bg-[#ececec] font-bold text-[#222]">{n}</div>
                <div className="flex w-[15.500px] items-center justify-center border-r border-[#bbb]">
                  <svg viewBox="0 0 10 10" width="10" height="10"><rect x="0.500" y="0.500" width="9" height="9" fill="#f5f5f5" stroke="#999" /><path d="M3 3l4 4M7 3L3 7" stroke="#aaa" strokeWidth="1.400" /></svg>
                </div>
                <div className={`w-[16px] border-r border-[#bbb] ${c}`} />
                <div className="flex min-w-0 flex-1 items-center overflow-hidden whitespace-nowrap border-r border-[#aaa] pl-[2px]">{t}</div>
                <div className="flex w-[21px] items-center border-r border-[#aaa] pl-[3px]">1</div>
              </div>
            ))}
            <div className="w-[11px] flex-1 bg-[#efefef]" />
          </div>
          <div className="mt-[8px] flex justify-between">
            <div className={`${btn} h-[18px] w-[88.500px]`}>Add Layer</div>
            <div className={`${btn} h-[18px] w-[88.500px]`}>Remove Layer</div>
          </div>
        </div>
      </div>
    </div>
  );
}

/* ---------- routing dock ---------- */

const field = "flex items-center rounded-[2px] border border-[#a4a4a4] bg-white text-[8.600px] whitespace-nowrap overflow-hidden";

function RoutingDock() {
  const inner: [string, string, string][] = [
    ["id", "gip_objectid", "pl-[2px]"],
    ["source", "efrom_objectid", "justify-end pr-[3px]"],
    ["target", "odeto_objectid", "justify-end pr-[3px]"],
    ["cost", "shapelength", "pl-[2px]"],
    ["reverse_cost", "reverse_cost", "pl-[2px] bg-[#efefef]! text-[#888]"],
  ];
  return (
    <div className="flex w-[152px] shrink-0 flex-col text-[8.600px]">
      <div className="pt-[0.500px]"><DockTitle title="pgRouting Layer" gap="mx-[7px]" /></div>
      <div className="flex flex-1 flex-col pl-[7px] pr-[6px]">
        <div className="mt-[9px] flex items-center"><span className="w-[38.500px]">Database</span><Combo text="Postgis 2.0" cls="h-[15px] flex-1" /></div>
        <div className="mt-[3px] flex items-center"><span className="w-[38.500px]">Function</span><Combo text="dijkstra" cls="h-[15px] flex-1" /></div>
        <div className="mt-[14px] flex h-[161px] flex-col rounded-[2px] border border-[#bcbcbc] pl-[6px] pr-[5px]">
          <span className="-mt-[6px] h-[11px] w-[14px] bg-[#efefef] leading-[11px]">sql</span>
          <div className="mt-[6px] flex items-center"><span className="w-[44.500px]">edge_table</span><div className={`${field} h-[15px] flex-1 justify-end pr-[2px]`}>wien.strassengraph</div></div>
          <div className="mt-[3px] flex items-center"><span className="w-[44.500px]">geometry</span><div className={`${field} h-[15px] flex-1 pl-[2.500px]`}>geom</div></div>
          <div className="mt-[3px] flex h-[107px] flex-col gap-[3.200px] rounded-[2px] border border-[#bcbcbc] pl-[5px] pr-[5px] pt-[9px]">
            {inner.map(([l, v, c]) => (
              <div key={l} className="flex items-center">
                <span className="w-[52px] whitespace-nowrap">{l}</span>
                <div className={`${field} h-[15px] flex-1 ${c}`}>{v}</div>
              </div>
            ))}
          </div>
        </div>
        {[["source_id", "10341531", "mt-[9px]"], ["target_id", "10345114", "mt-[2.500px]"]].map(([l, v, m]) => (
          <div key={l} className={`flex items-center ${m}`}>
            <span className="w-[38.500px]">{l}</span>
            <div className={`${field} h-[15.500px] flex-1 pl-[3px]`}>{v}</div>
            <div className="ml-[2.500px] flex h-[17px] w-[17px] items-center justify-center rounded-[2px] border border-[#a29ca8] bg-[#f2f2f2]">
              <svg viewBox="0 0 14 14" width="13" height="13"><circle cx="7" cy="7" r="6" fill="#52b34e" stroke="#8aca83" /><path d="M7 3.500v7M3.500 7h7" stroke="#fff" strokeWidth="2.200" /></svg>
            </div>
          </div>
        ))}
        <div className="mt-[3.500px] flex h-[12px] items-center">
          <div className="h-[10.500px] w-[10.500px] border border-[#c2c2c2] bg-white" />
          <span className="ml-[3px] w-[38.500px]">directed</span>
          <div className="h-[10.500px] w-[10.500px] border border-[#c2c2c2] bg-white" />
          <span className="ml-[3px] whitespace-nowrap">has_reverse_cost</span>
        </div>
        <div className="flex-1" />
        <div className="mb-[7.500px] grid grid-cols-2 gap-x-[2.500px] gap-y-[6.500px]">
          {["Run", "Clear", "Export", "Export merged"].map((t) => <div key={t} className={`${btn} h-[18.500px]`}>{t}</div>)}
        </div>
      </div>
      <div className="flex h-[16px] shrink-0 items-start">
        <div className="flex h-[16px] w-[71px] items-center justify-center border border-t-0 border-[#b5b5b5] bg-[#efefef] text-[8.500px]">pgRouting L...</div>
        <div className="flex h-[13.500px] w-[81px] items-center justify-center border border-l-0 border-[#b5b5b5] bg-[#e6e6e6] text-[8.500px]">Processing To...</div>
      </div>
    </div>
  );
}

function StatusBar() {
  const box = "flex h-[17px] shrink-0 items-center justify-center rounded-[1px] border border-[#9d9d9d] whitespace-nowrap";
  return (
    <div className="flex h-[20px] shrink-0 items-center pl-[4.500px] text-[8.600px]">
      <span className="w-[439.500px] shrink-0 whitespace-nowrap tracking-[-0.170px]">Select the polyline in a vector layer (Right click to quit)</span>
      <div className={`${box} w-[17px] bg-[#e6e6e6]`}>
        <S n={14}><path d="M4 3l4 5M9 2l-2 7M3 9l6 0M12 8l5 3M11 13l6-3M8 12l-3 6l7 2l5-5" stroke="#222" strokeWidth="1.500" fill="none" /><circle cx="8" cy="6" r="4" fill="none" stroke="#222" strokeWidth="1.500" /><circle cx="14" cy="14" r="5" fill="none" stroke="#222" strokeWidth="1.500" /></S>
      </div>
      <div className={`${box} ml-[3px] w-[52px]`}>Coordinate:</div>
      <div className={`${box} ml-[2px] w-[239px] bg-white`}>-1765,344205</div>
      <div className={`${box} ml-[2px] w-[30px] text-[8.400px]`}>Scale</div>
      <Combo text="1:60020" white cls="ml-[2px] h-[17px] w-[66px] shrink-0" />
      <div className={`${box} ml-[2px] w-[17px]`}>
        <S n={15}><path d="M3 4h16v14H3z" fill="#e3e3e3" stroke="#aaa" /><path d="M6 17L19 2" stroke="#555" strokeWidth="2.500" /><path d="M3 5l11 11" stroke="#d44" strokeWidth="2" /><path d="M5 19l3-5l3 3z" fill="#c33" /></S>
      </div>
      <div className={`${box} ml-[2px] w-[50px] gap-[3px]`}>
        <div className="flex h-[10px] w-[10px] items-center justify-center bg-[#8eb4e0]">
          <svg viewBox="0 0 8 8" width="8" height="8"><path d="M1.200 1.200l5.600 5.600M6.800 1.200L1.200 6.800" stroke="#000" strokeWidth="2.400" /></svg>
        </div>
        Render
      </div>
      <div className={`${box} ml-[2px] w-[53px] text-[8.500px]`}>EPSG:31256</div>
      <div className={`${box} ml-[2px] w-[19px] bg-[#ddd]`}>
        <S n={14}><circle cx="11" cy="11" r="9" fill="#555" stroke="#222" /><circle cx="11" cy="11" r="4.500" fill="#eee" /><path d="M11 1v20M1 11h20" stroke="#222" strokeWidth="2" /></S>
      </div>
      <div className={`${box} ml-[2px] w-[17px]`}>
        <S n={14}><path d="M11 2l9.500 17h-19z" fill="#fff8c8" stroke="#8a7c2a" strokeWidth="1.500" /><path d="M11 7.500v6M11 15v2" stroke="#333" strokeWidth="2" /></S>
      </div>
    </div>
  );
}

export default function App() {
  return (
    <div className="flex h-[586px] w-[1022px] flex-col overflow-hidden bg-[#efefef] font-['DejaVu_Sans_Condensed','DejaVu_Sans',sans-serif] text-[8.600px] leading-none text-[#1a1a1a]">
      <Menu />
      <Toolbar1 />
      <Toolbar2 />
      <div className="flex min-h-0 flex-1">
        <LeftStrip />
        <div className="flex w-[152px] shrink-0 flex-col"><LayersDock /><BrowserDock /></div>
        <div className="flex w-[6px] shrink-0 items-center justify-center"><div className={`h-[50px] w-[3px] ${dots}`} /></div>
        <div className="flex w-[645px] shrink-0 flex-col">
          <div className="mt-px h-[161px] w-[645px] shrink-0 border border-[#bdbdbd]"><MapView /></div>
          <ProfileDock />
        </div>
        <div className="flex w-[5px] shrink-0 items-center justify-center"><div className={`h-[160px] w-[3px] ${dots}`} /></div>
        <RoutingDock />
        <div className="w-[2px] shrink-0 border-r border-[#ccc]" />
        <RightStrip />
      </div>
      <StatusBar />
    </div>
  );
}
